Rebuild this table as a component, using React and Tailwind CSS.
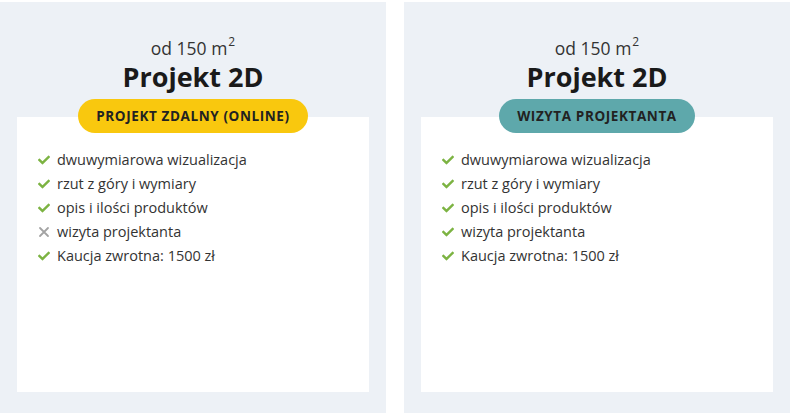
import React from "react";
import { FaCheck } from "react-icons/fa";

const plans = [
  {
    badge: "Projekt zdalny (online)",
    badgeClass: "bg-[#f9c80e]",
    items: [
      { text: "dwuwymiarowa wizualizacja", ok: true },
      { text: "rzut z góry i wymiary", ok: true },
      { text: "opis i ilości produktów", ok: true },
      { text: "wizyta projektanta", ok: false },
      { text: "Kaucja zwrotna: 1500 zł", ok: true },
    ],
  },
  {
    badge: "Wizyta projektanta",
    badgeClass: "bg-[#5ea8ab]",
    items: [
      { text: "dwuwymiarowa wizualizacja", ok: true },
      { text: "rzut z góry i wymiary", ok: true },
      { text: "opis i ilości produktów", ok: true },
      { text: "wizyta projektanta", ok: true },
      { text: "Kaucja zwrotna: 1500 zł", ok: true },
    ],
  },
];

const Cross = () => (
  <svg width="12" height="12" viewBox="0 0 12 12" className="shrink-0">
    <path d="M2 2 L10 10 M10 2 L2 10" stroke="#a3a3a3" strokeWidth="1.8" strokeLinecap="round" />
  </svg>
);

const PlanCard = ({ plan }) => (
  <div className="w-[386px] bg-[#edf1f6] pt-[35px] pb-[18px] px-[17px] flex flex-col items-center">
    <div className="flex items-start h-[22px] text-[17.5px] leading-[22px] text-[#333]">
      <span>od 150 m</span>
      <span className="text-[12px] leading-[12px] ml-[1px] -mt-[1px]">2</span>
    </div>
    <h2 className="mt-[3px] text-[27px] leading-[30px] font-bold text-[#1a1a1a]">Projekt 2D</h2>

    {/* badge sits over the white box */}
    <div
      className={`relative z-10 mt-[7px] h-[34px] px-[18px] rounded-full flex items-center text-[13.5px] font-bold uppercase tracking-[0.6px] text-[#222] ${plan.badgeClass}`}
    >
      {plan.badge}
    </div>

    <div className="-mt-[16px] w-full h-[275px] bg-white pt-[31px] pl-[21px]">
      <ul>
        {plan.items.map((item, idx) => (
          <li key={idx} className="flex items-center gap-[7px] h-[24px] text-[14.5px] text-[#333]">
            {item.ok ? (
              <FaCheck className="w-[12px] h-[12px] text-[#7cb342] shrink-0" />
            ) : (
              <Cross />
            )}
            <span>{item.text}</span>
          </li>
        ))}
      </ul>
    </div>
  </div>
);

export default function App() {
  return (
    <div
      className="w-[793px] h-[413px] bg-white pt-[2px] flex gap-[18px]"
      style={{ fontFamily: '"Open Sans", sans-serif' }}
    >
      {plans.map((plan, idx) => (
        <PlanCard key={idx} plan={plan} />
      ))}
    </div>
  );
}
